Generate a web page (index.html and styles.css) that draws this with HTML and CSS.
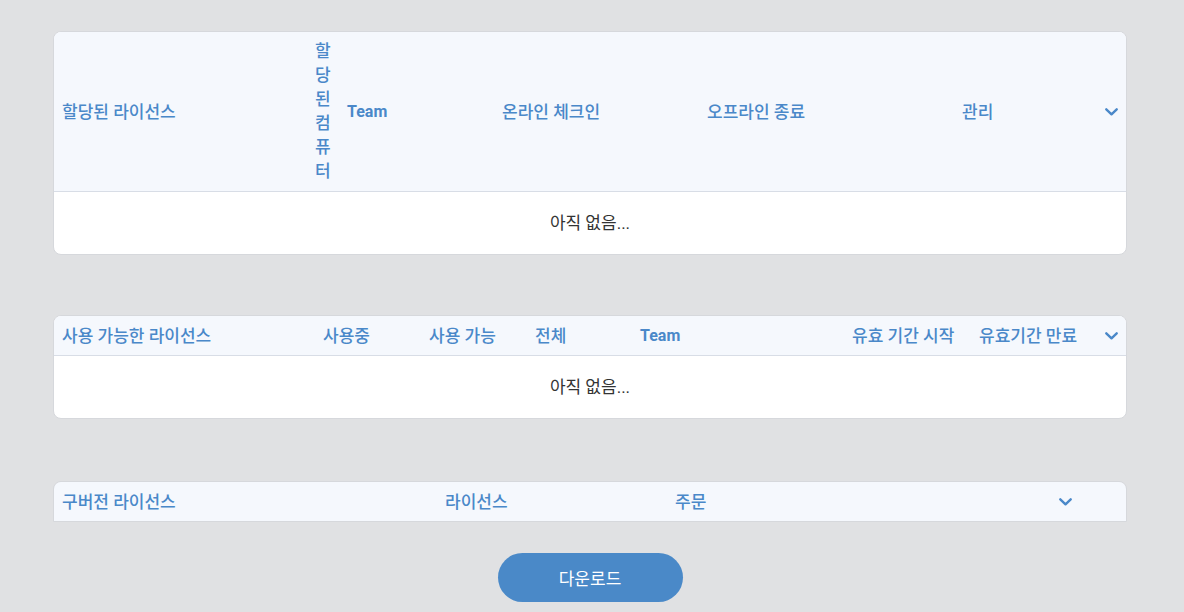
FILE: index.html
```html
<!DOCTYPE html>
<html lang="ko">
<head>
<meta charset="utf-8">
<link rel="stylesheet" href="styles.css">
</head>
<body>
<main class="page">
  <section class="card card-assigned">
    <div class="head">
      <div class="th">할당된 라이선스</div>
      <div class="th narrow">할당된 컴퓨터</div>
      <div class="th latin">Team</div>
      <div class="th">온라인 체크인</div>
      <div class="th">오프라인 종료</div>
      <div class="th">관리</div>
      <div class="th icon"><svg width="13" height="8" viewBox="0 0 13 8"><polyline points="1.3,1.3 6.5,6.3 11.7,1.3" fill="none" stroke="currentColor" stroke-width="2.4" stroke-linecap="round" stroke-linejoin="round"/></svg></div>
    </div>
    <div class="empty">아직 없음...</div>
  </section>

  <section class="card card-available">
    <div class="head">
      <div class="th">사용 가능한 라이선스</div>
      <div class="th">사용중</div>
      <div class="th">사용 가능</div>
      <div class="th">전체</div>
      <div class="th latin">Team</div>
      <div class="th">유효 기간 시작</div>
      <div class="th">유효기간 만료</div>
      <div class="th icon"><svg width="13" height="8" viewBox="0 0 13 8"><polyline points="1.3,1.3 6.5,6.3 11.7,1.3" fill="none" stroke="currentColor" stroke-width="2.4" stroke-linecap="round" stroke-linejoin="round"/></svg></div>
    </div>
    <div class="empty">아직 없음...</div>
  </section>

  <section class="card card-legacy">
    <div class="head">
      <div class="th">구버전 라이선스</div>
      <div class="th">라이선스</div>
      <div class="th">주문</div>
      <div class="th icon"><svg width="13" height="8" viewBox="0 0 13 8"><polyline points="1.3,1.3 6.5,6.3 11.7,1.3" fill="none" stroke="currentColor" stroke-width="2.4" stroke-linecap="round" stroke-linejoin="round"/></svg></div>
      <div class="th"></div>
    </div>
  </section>

  <div class="actions">
    <button class="btn" type="button">다운로드</button>
  </div>
</main>
</body>
</html>
```

FILE: styles.css
```css
* { box-sizing: border-box; }

html, body {
  margin: 0;
  padding: 0;
  background: #e0e1e3;
}

body {
  font-family: Roboto, "Noto Sans CJK KR", sans-serif;
  font-size: 17px;
  line-height: 24px;
  color: #333;
}

.page {
  width: 1074px;
  margin-left: 53px;
  padding-top: 31px;
}

.card {
  background: #fff;
  border: 1px solid #d6d8dc;
  border-radius: 8px;
  overflow: hidden;
}

.card-available { margin-top: 60px; }
.card-legacy { margin-top: 62px; border-radius: 8px 8px 0 0; }

.head {
  display: grid;
  align-items: center;
  background: #f5f8fd;
  border-bottom: 1px solid #d8dde6;
}

.card-assigned .head { grid-template-columns: 253px 32px 155px 205px 255px 143px 29px; height: 160px; }
.card-available .head { grid-template-columns: 261px 106px 106px 105px 212px 127px 126px 29px; height: 40px; }
.card-legacy .head { grid-template-columns: 383px 230px 384px 30px 45px; height: 39px; border-bottom: none; }

.th {
  padding: 8px;
  color: #4a88c9;
  font-weight: 500;
  white-space: nowrap;
}

.th.narrow {
  padding: 7px 8px 8px;
  white-space: normal;
  word-break: break-all;
}

.th.latin {
  font-size: 16px;
  font-weight: 700;
}

.th.icon {
  display: flex;
  align-items: center;
  height: 39px;
}

.th.icon svg { display: block; }

.empty {
  padding: 19px 8px;
  text-align: center;
  color: #333;
}

.actions {
  display: flex;
  justify-content: center;
  margin-top: 31px;
}

.btn {
  width: 185px;
  height: 49px;
  border: none;
  border-radius: 25px;
  background: #4a89c8;
  color: #fff;
  font-family: Roboto, "Noto Sans CJK KR", sans-serif;
  font-size: 17px;
  padding: 0;
}
```
